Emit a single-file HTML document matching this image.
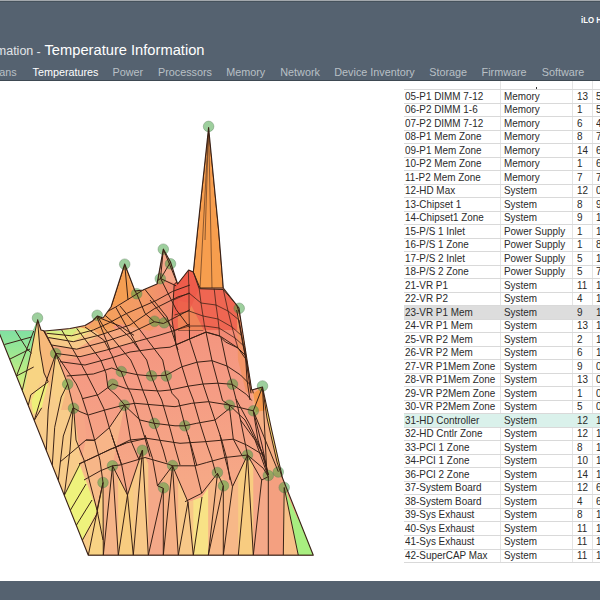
<!DOCTYPE html>
<html><head><meta charset="utf-8"><style>
html,body{margin:0;padding:0;width:600px;height:600px;overflow:hidden;background:#fff;font-family:"Liberation Sans",sans-serif;}
#hdr{position:absolute;left:0;top:0;width:600px;height:81px;background:#556270;}
#topline{position:absolute;left:0;top:0;width:600px;height:1px;background:#a3a8ad;}
#topline2{position:absolute;left:0;top:1px;width:600px;height:1px;background:#46525c;}
#hbot{position:absolute;left:0;top:80px;width:600px;height:1px;background:#3e4952;}
#title{position:absolute;left:0;top:42px;font-size:14.7px;color:#fff;white-space:nowrap;}
#title .pre{color:#d5d9dd;position:absolute;right:-44.5px;}
.tab{position:absolute;top:66.3px;font-size:10.8px;color:#b9c0c6;white-space:nowrap;}
#ilo{position:absolute;left:580.5px;top:13.5px;font-size:9.5px;font-weight:bold;color:#fff;white-space:nowrap;transform:scaleX(0.82);transform-origin:0 0;}
#foot{position:absolute;left:0;top:580.5px;width:600px;height:20px;background:#556270;}
.r{position:absolute;left:404px;width:196px;height:13.5px;border-top:1px solid #d9d9d9;box-sizing:border-box;font-size:9.9px;color:#2a2a2a;}
.r span{position:absolute;top:-0.6px;white-space:nowrap;font-size:10.6px;transform:scaleX(0.935);transform-origin:0 50%;}
.c1{left:1px;} .c2{left:100px;} .c3{left:172.5px;} .c4{left:192px;}
.vl{position:absolute;top:81px;width:1px;height:482px;background:#e4e4e4;}
#plot{position:absolute;left:0;top:0;}
</style></head><body>
<div id="hdr"></div>
<div id="topline"></div><div id="topline2"></div>
<div id="hbot"></div>
<div id="title"><span style="position:absolute;left:44.5px;">Temperature Information</span><span style="position:absolute;right:-33.3px;top:1.6px;font-size:12.5px;color:#e2e5e8;">System Information</span><span style="position:absolute;left:36.6px;top:2.6px;font-size:12.5px;color:#e2e5e8;">-</span></div>
<div class="tab" style="left:-0.7px;">ans</div>
<div class="tab" style="left:32.5px;color:#fff;">Temperatures</div>
<div class="tab" style="left:112.5px;">Power</div>
<div class="tab" style="left:158px;">Processors</div>
<div class="tab" style="left:226.2px;">Memory</div>
<div class="tab" style="left:280.3px;">Network</div>
<div class="tab" style="left:334.3px;">Device Inventory</div>
<div class="tab" style="left:429.3px;">Storage</div>
<div class="tab" style="left:481.6px;">Firmware</div>
<div class="tab" style="left:541.7px;">Software</div>
<div id="ilo">iLO H</div>
<div class="vl" style="left:500px"></div>
<div class="vl" style="left:571.5px"></div>
<div class="vl" style="left:592px"></div>
<div class="r" style="top:89.30px;"><span class="c1">05-P1 DIMM 7-12</span><span class="c2">Memory</span><span class="c3">13</span><span class="c4">5</span></div><div class="r" style="top:102.81px;"><span class="c1">06-P2 DIMM 1-6</span><span class="c2">Memory</span><span class="c3">1</span><span class="c4">5</span></div><div class="r" style="top:116.31px;"><span class="c1">07-P2 DIMM 7-12</span><span class="c2">Memory</span><span class="c3">6</span><span class="c4">4</span></div><div class="r" style="top:129.82px;"><span class="c1">08-P1 Mem Zone</span><span class="c2">Memory</span><span class="c3">8</span><span class="c4">7</span></div><div class="r" style="top:143.32px;"><span class="c1">09-P1 Mem Zone</span><span class="c2">Memory</span><span class="c3">14</span><span class="c4">6</span></div><div class="r" style="top:156.83px;"><span class="c1">10-P2 Mem Zone</span><span class="c2">Memory</span><span class="c3">1</span><span class="c4">6</span></div><div class="r" style="top:170.34px;"><span class="c1">11-P2 Mem Zone</span><span class="c2">Memory</span><span class="c3">7</span><span class="c4">7</span></div><div class="r" style="top:183.84px;"><span class="c1">12-HD Max</span><span class="c2">System</span><span class="c3">12</span><span class="c4">0</span></div><div class="r" style="top:197.35px;"><span class="c1">13-Chipset 1</span><span class="c2">System</span><span class="c3">8</span><span class="c4">9</span></div><div class="r" style="top:210.85px;"><span class="c1">14-Chipset1 Zone</span><span class="c2">System</span><span class="c3">9</span><span class="c4">1</span></div><div class="r" style="top:224.36px;"><span class="c1">15-P/S 1 Inlet</span><span class="c2">Power Supply</span><span class="c3">1</span><span class="c4">1</span></div><div class="r" style="top:237.87px;"><span class="c1">16-P/S 1 Zone</span><span class="c2">Power Supply</span><span class="c3">1</span><span class="c4">8</span></div><div class="r" style="top:251.37px;"><span class="c1">17-P/S 2 Inlet</span><span class="c2">Power Supply</span><span class="c3">5</span><span class="c4">1</span></div><div class="r" style="top:264.88px;"><span class="c1">18-P/S 2 Zone</span><span class="c2">Power Supply</span><span class="c3">5</span><span class="c4">7</span></div><div class="r" style="top:278.38px;"><span class="c1">21-VR P1</span><span class="c2">System</span><span class="c3">11</span><span class="c4">1</span></div><div class="r" style="top:291.89px;"><span class="c1">22-VR P2</span><span class="c2">System</span><span class="c3">4</span><span class="c4">1</span></div><div class="r" style="top:305.40px;background:#dddddd;"><span class="c1">23-VR P1 Mem</span><span class="c2">System</span><span class="c3">9</span><span class="c4">1</span></div><div class="r" style="top:318.90px;"><span class="c1">24-VR P1 Mem</span><span class="c2">System</span><span class="c3">13</span><span class="c4">1</span></div><div class="r" style="top:332.41px;"><span class="c1">25-VR P2 Mem</span><span class="c2">System</span><span class="c3">2</span><span class="c4">1</span></div><div class="r" style="top:345.91px;"><span class="c1">26-VR P2 Mem</span><span class="c2">System</span><span class="c3">6</span><span class="c4">1</span></div><div class="r" style="top:359.42px;"><span class="c1">27-VR P1Mem Zone</span><span class="c2">System</span><span class="c3">9</span><span class="c4">0</span></div><div class="r" style="top:372.93px;"><span class="c1">28-VR P1Mem Zone</span><span class="c2">System</span><span class="c3">13</span><span class="c4">0</span></div><div class="r" style="top:386.43px;"><span class="c1">29-VR P2Mem Zone</span><span class="c2">System</span><span class="c3">1</span><span class="c4">0</span></div><div class="r" style="top:399.94px;"><span class="c1">30-VR P2Mem Zone</span><span class="c2">System</span><span class="c3">5</span><span class="c4">0</span></div><div class="r" style="top:413.44px;background:#daf1eb;"><span class="c1">31-HD Controller</span><span class="c2">System</span><span class="c3">12</span><span class="c4">1</span></div><div class="r" style="top:426.95px;"><span class="c1">32-HD Cntlr Zone</span><span class="c2">System</span><span class="c3">12</span><span class="c4">1</span></div><div class="r" style="top:440.46px;"><span class="c1">33-PCI 1 Zone</span><span class="c2">System</span><span class="c3">8</span><span class="c4">1</span></div><div class="r" style="top:453.96px;"><span class="c1">34-PCI 1 Zone</span><span class="c2">System</span><span class="c3">10</span><span class="c4">1</span></div><div class="r" style="top:467.47px;"><span class="c1">36-PCI 2 Zone</span><span class="c2">System</span><span class="c3">14</span><span class="c4">1</span></div><div class="r" style="top:480.97px;"><span class="c1">37-System Board</span><span class="c2">System</span><span class="c3">12</span><span class="c4">6</span></div><div class="r" style="top:494.48px;"><span class="c1">38-System Board</span><span class="c2">System</span><span class="c3">4</span><span class="c4">6</span></div><div class="r" style="top:507.99px;"><span class="c1">39-Sys Exhaust</span><span class="c2">System</span><span class="c3">8</span><span class="c4">1</span></div><div class="r" style="top:521.49px;"><span class="c1">40-Sys Exhaust</span><span class="c2">System</span><span class="c3">11</span><span class="c4">1</span></div><div class="r" style="top:535.00px;"><span class="c1">41-Sys Exhaust</span><span class="c2">System</span><span class="c3">11</span><span class="c4">1</span></div><div class="r" style="top:548.50px;"><span class="c1">42-SuperCAP Max</span><span class="c2">System</span><span class="c3">11</span><span class="c4">1</span></div>
<div class="r" style="top:562.01px;height:2px;"></div>
<div id="foot"></div><div style="position:absolute;left:535.5px;top:87px;width:1.5px;height:1.5px;background:#333;"></div>
<svg id="plot" width="600" height="600" viewBox="0 0 600 600"><defs><linearGradient id="gl" x1="0" y1="330" x2="0" y2="410" gradientUnits="userSpaceOnUse"><stop offset="0" stop-color="#80e0a2"/><stop offset="0.3" stop-color="#9ee892"/><stop offset="0.6" stop-color="#c8ee80"/><stop offset="0.85" stop-color="#eee488"/><stop offset="1" stop-color="#f5d080"/></linearGradient><linearGradient id="gs" x1="0" y1="300" x2="0" y2="480" gradientUnits="userSpaceOnUse"><stop offset="0" stop-color="#f3927c"/><stop offset="0.5" stop-color="#f59c84"/><stop offset="1" stop-color="#f6a886"/></linearGradient><clipPath id="above"><rect x="0" y="0" width="330" height="330.5"/></clipPath><clipPath id="below"><rect x="0" y="330.5" width="330" height="300"/></clipPath></defs>
<defs><clipPath id="silc"><polygon points="88.3,555.3 -2.0,330.0 33.0,330.0 37.5,319.5 41.0,330.0 44.5,331.0 55.0,330.0 70.0,328.5 85.0,325.5 92.5,321.0 97.5,316.0 103.0,318.0 111.0,307.0 124.7,264.0 135.0,291.0 143.0,290.0 157.0,284.0 163.3,249.0 170.5,262.0 177.6,284.0 188.6,270.0 193.3,272.0 197.6,230.0 208.6,127.5 218.6,230.0 223.3,288.0 239.0,308.0 240.0,315.0 251.7,390.0 262.5,387.0 271.7,430.0 282.5,478.0 313.3,555.3"/></clipPath></defs>
<g clip-path="url(#silc)">
<polygon points="88.3,555.3 -2.0,330.0 33.0,330.0 37.5,319.5 41.0,330.0 44.5,331.0 55.0,330.0 70.0,328.5 85.0,325.5 92.5,321.0 97.5,316.0 103.0,318.0 111.0,307.0 124.7,264.0 135.0,291.0 143.0,290.0 157.0,284.0 163.3,249.0 170.5,262.0 177.6,284.0 188.6,270.0 193.3,272.0 197.6,230.0 208.6,127.5 218.6,230.0 223.3,288.0 239.0,308.0 240.0,315.0 251.7,390.0 262.5,387.0 271.7,430.0 282.5,478.0 313.3,555.3" fill="#f6a585"/>
<polygon points="88.3,555.3 -2.0,330.0 33.0,330.0 37.5,319.5 55.7,353.3 67.7,384.0 73.7,408.0 80.0,455.0 103.0,482.5" fill="#f8cc8a"/>
<polygon points="-2.0,330.0 33.0,330.0 37.5,319.5 30.8,353.3 25.0,388.3 23.0,398.0 24.1,395.0" fill="url(#gl)"/>
<polygon points="30.8,394.8 48.2,381.8 41.7,407.8 33.0,414.3" fill="#eef07a"/>
<polygon points="25.0,388.3 30.8,353.3 37.5,319.5 40.0,350.0 44.0,373.0 36.7,390.0 29.2,405.0 21.7,403.0" fill="#f8d483"/>
<polygon points="64.3,495.3 79.0,464.0 97.0,510.0 82.3,540.3" fill="#eef27c"/>
<polygon points="37.5,319.5 55.7,353.3 50.0,388.0 44.0,373.0 40.0,350.0" fill="#f7b97a"/>
<polygon points="37.5,319.5 55.7,353.3 47.0,336.0" fill="#f0a050" fill-opacity="0.7"/>
<polygon points="55.7,353.3 67.7,384.0 61.0,410.0 50.0,388.0" fill="#f8cf86"/>
<polygon points="67.7,384.0 73.7,408.0 72.0,410.0 61.0,410.0" fill="#f6b880"/>
<polygon points="88.3,555.3 90.0,473.0 103.0,482.5 112.5,465.8 127.5,495.0 142.5,450.0 157.5,485.8 172.5,465.8 188.0,502.0 202.0,497.0 217.5,473.3 232.5,486.7 247.5,455.0 261.7,480.0 268.3,476.7 277.5,471.7 284.2,487.5 313.3,555.3" fill="#f8c487"/>
<polygon points="88.3,473.0 90.0,473.0 103.0,482.5 103.3,482.0 103.3,555.3 88.3,555.3" fill="#f8d284"/>
<polygon points="103.3,482.0 112.5,465.8 118.3,477.1 118.3,555.3 103.3,555.3" fill="#f5b488"/>
<polygon points="118.3,477.1 127.5,495.0 133.3,477.6 133.3,555.3 118.3,555.3" fill="#f8cc80"/>
<polygon points="133.3,477.6 142.5,450.0 148.3,463.8 148.3,555.3 133.3,555.3" fill="#f8c888"/>
<polygon points="148.3,463.8 157.5,485.8 163.3,478.1 163.3,555.3 148.3,555.3" fill="#f4a888"/>
<polygon points="163.3,478.1 172.5,465.8 178.3,479.3 178.3,555.3 163.3,555.3" fill="#f5b085"/>
<polygon points="178.3,479.3 188.0,502.0 193.3,500.1 193.3,555.3 178.3,555.3" fill="#f8c888"/>
<polygon points="193.3,500.1 202.0,497.0 208.3,487.4 208.3,555.3 193.3,555.3" fill="#f8e286"/>
<polygon points="208.3,487.4 217.5,473.3 223.3,478.5 223.3,555.3 208.3,555.3" fill="#f7b888"/>
<polygon points="223.3,478.5 232.5,486.7 238.3,474.4 238.3,555.3 223.3,555.3" fill="#f7b888"/>
<polygon points="238.3,474.4 247.5,455.0 253.3,465.2 253.3,555.3 238.3,555.3" fill="#f8cc80"/>
<polygon points="253.3,465.2 261.7,480.0 268.3,476.7 268.3,555.3 253.3,555.3" fill="#f5a888"/>
<polygon points="268.3,476.7 277.5,471.7 283.3,485.4 283.3,555.3 268.3,555.3" fill="#f4a080"/>
<polygon points="283.3,485.4 284.2,487.5 298.3,555.3 298.3,555.3 283.3,555.3" fill="#f7c088"/>
<polygon points="298.3,487.5 313.3,555.3 313.3,555.3 298.3,555.3" fill="#a8ee80"/>
<polygon points="284.2,487.5 313.3,555.3 298.3,555.3" fill="#a8ee80"/>
<polygon points="64.3,495.3 79.0,464.0 97.0,510.0 82.3,540.3" fill="#eef27c"/>
<polygon points="49.0,340.0 44.5,331.0 55.0,330.0 70.0,328.5 85.0,325.5 92.5,321.0 97.5,316.0 103.0,318.0 120.0,314.0 140.0,306.0 160.0,300.0 176.0,300.0 206.0,332.0 220.0,336.0 238.0,348.0 250.0,360.0 251.7,390.0 253.3,410.8 262.0,430.0 268.3,476.7 261.7,480.0 247.5,455.0 232.5,486.7 217.5,473.3 202.0,497.0 188.0,502.0 172.5,465.8 157.5,485.8 142.5,450.0 127.5,495.0 112.5,465.8 103.0,482.5 90.0,473.0 82.3,398.7 76.3,384.0 55.7,353.3" fill="url(#gs)"/>
<polygon points="80.0,464.0 86.0,440.0 94.7,440.3 109.3,427.7 124.7,405.0 116.0,448.3 112.5,465.8 103.0,482.5 97.0,510.0" fill="#f7b888" fill-opacity="0.85"/>
<polygon points="45.0,330.8 63.3,330.0 80.0,327.5 71.7,335.8 46.7,333.3" fill="#d8ee82"/>
<polygon points="46.7,333.3 71.7,335.8 80.0,327.5 90.0,325.0 93.3,330.0 73.3,341.7 48.3,337.5" fill="#f0e484"/>
<polygon points="48.3,337.5 73.3,341.7 93.3,330.0 100.0,335.0 76.7,349.2 51.7,345.0" fill="#f8c888"/>
<polygon points="51.7,345.0 76.7,349.2 100.0,335.0 130.0,325.0 140.0,320.0 140.0,342.0 130.0,343.3 106.7,350.0 80.0,356.7 60.0,361.7 55.0,353.3" fill="#f7ae80" fill-opacity="0.75"/>
<polygon points="80.0,327.5 90.0,325.0 97.5,316.7 117.0,330.0 100.0,335.0 93.3,330.0" fill="#f5a462"/>
<linearGradient id="gb" x1="100" y1="0" x2="180" y2="0" gradientUnits="userSpaceOnUse"><stop offset="0" stop-color="#f5a05a"/><stop offset="0.55" stop-color="#f39a66"/><stop offset="1" stop-color="#f08474"/></linearGradient>
<polygon points="97.5,316.0 103.0,318.0 111.0,307.0 124.7,264.0 135.0,291.0 143.0,290.0 157.0,284.0 163.3,249.0 170.5,262.0 177.6,284.0 176.0,300.0 178.0,330.0 164.0,323.0 150.0,331.0 120.0,324.0 103.0,330.0" fill="url(#gb)"/>
<polygon points="111.0,307.0 124.7,264.0 136.5,294.0 117.0,304.5" fill="#f59e52"/>
<polygon points="157.0,284.0 163.3,249.0 170.5,262.0 177.6,284.0 160.5,279.0" fill="#f4a88a"/>
<polygon points="124.7,264.0 136.5,294.0 133.0,294.0" fill="#f8b070" fill-opacity="0.6"/>
<g clip-path="url(#above)">
<polygon points="174.2,284.5 188.3,269.5 193.3,272.0 199.2,288.7 223.3,289.5 236.7,305.0 240.0,315.0 246.7,350.0 250.0,365.0 238.0,348.0 220.0,336.0 206.0,332.0 189.5,339.0 176.0,345.0 172.0,320.0" fill="#ef6652"/>
<polygon points="177.9,300.4 190.2,303.2 204.0,330.7 177.9,330.7" fill="#f08a58" fill-opacity="0.85"/>
<polygon points="174.2,284.5 188.3,269.5 193.3,272.0 199.2,288.7 189.0,311.0 174.5,315.0" fill="#ee5a4a" fill-opacity="0.8"/>
</g><g clip-path="url(#below)">
<polygon points="174.2,284.5 188.3,269.5 193.3,272.0 199.2,288.7 223.3,289.5 236.7,305.0 240.0,315.0 246.7,350.0 250.0,365.0 238.0,348.0 220.0,336.0 206.0,332.0 189.5,339.0 176.0,345.0 172.0,320.0" fill="#f38a74"/>
</g>
<polygon points="193.3,272.0 197.6,230.0 208.6,127.5 218.6,230.0 223.3,288.0 200.0,288.0" fill="#f79e4e"/>
<polygon points="236.7,305.0 240.0,315.0 246.7,350.0 253.3,393.3 246.0,392.0 238.0,360.0" fill="#f39466"/>
<polygon points="240.0,330.0 246.7,350.0 253.3,393.3 248.0,370.0" fill="#f5a050"/>
<polygon points="253.3,393.3 262.5,387.0 271.7,430.0 282.5,478.0 278.3,471.7 268.3,475.0 262.0,430.0 253.3,410.8" fill="#f6b084"/>
<polygon points="253.3,393.3 262.5,387.0 267.0,410.0 256.0,412.0" fill="#f4984c"/>
<polygon points="262.5,387.0 271.7,430.0 282.5,478.0 277.0,462.0 267.0,418.0" fill="#f4d66e"/>
<line x1="0" y1="330.4" x2="34" y2="330.4" stroke="#b9b2ae" stroke-width="0.9"/><line x1="41" y1="330.4" x2="62" y2="330.4" stroke="#b9b2ae" stroke-width="0.9"/>
</g>
<circle cx="208.6" cy="126.4" r="5.3" fill="#3ca03c" fill-opacity="0.5" stroke="#5f7f5f" stroke-opacity="0.45" stroke-width="0.9"/>
<circle cx="163.3" cy="249.2" r="5.3" fill="#3ca03c" fill-opacity="0.5" stroke="#5f7f5f" stroke-opacity="0.45" stroke-width="0.9"/>
<circle cx="124.7" cy="264.2" r="5.3" fill="#3ca03c" fill-opacity="0.5" stroke="#5f7f5f" stroke-opacity="0.45" stroke-width="0.9"/>
<circle cx="170.5" cy="263.8" r="5.3" fill="#3ca03c" fill-opacity="0.5" stroke="#5f7f5f" stroke-opacity="0.45" stroke-width="0.9"/>
<circle cx="160.3" cy="278.7" r="5.3" fill="#3ca03c" fill-opacity="0.5" stroke="#5f7f5f" stroke-opacity="0.45" stroke-width="0.9"/>
<circle cx="136.7" cy="293.7" r="5.3" fill="#3ca03c" fill-opacity="0.5" stroke="#5f7f5f" stroke-opacity="0.45" stroke-width="0.9"/>
<circle cx="97.2" cy="315.3" r="5.3" fill="#3ca03c" fill-opacity="0.5" stroke="#5f7f5f" stroke-opacity="0.45" stroke-width="0.9"/>
<circle cx="37.5" cy="318.0" r="5.3" fill="#3ca03c" fill-opacity="0.5" stroke="#5f7f5f" stroke-opacity="0.45" stroke-width="0.9"/>
<circle cx="154.5" cy="321.2" r="5.3" fill="#3ca03c" fill-opacity="0.5" stroke="#5f7f5f" stroke-opacity="0.45" stroke-width="0.9"/>
<circle cx="164.2" cy="322.8" r="5.3" fill="#3ca03c" fill-opacity="0.5" stroke="#5f7f5f" stroke-opacity="0.45" stroke-width="0.9"/>
<circle cx="239.2" cy="308.3" r="5.3" fill="#3ca03c" fill-opacity="0.5" stroke="#5f7f5f" stroke-opacity="0.45" stroke-width="0.9"/>
<circle cx="55.7" cy="353.5" r="5.3" fill="#3ca03c" fill-opacity="0.5" stroke="#5f7f5f" stroke-opacity="0.45" stroke-width="0.9"/>
<circle cx="67.7" cy="384.2" r="5.3" fill="#3ca03c" fill-opacity="0.5" stroke="#5f7f5f" stroke-opacity="0.45" stroke-width="0.9"/>
<circle cx="73.5" cy="408.3" r="5.3" fill="#3ca03c" fill-opacity="0.5" stroke="#5f7f5f" stroke-opacity="0.45" stroke-width="0.9"/>
<circle cx="262.5" cy="386.0" r="5.3" fill="#3ca03c" fill-opacity="0.5" stroke="#5f7f5f" stroke-opacity="0.45" stroke-width="0.9"/>
<circle cx="232.5" cy="384.2" r="5.3" fill="#3ca03c" fill-opacity="0.5" stroke="#5f7f5f" stroke-opacity="0.45" stroke-width="0.9"/>
<circle cx="253.3" cy="410.8" r="5.3" fill="#3ca03c" fill-opacity="0.5" stroke="#5f7f5f" stroke-opacity="0.45" stroke-width="0.9"/>
<circle cx="247.5" cy="455.0" r="5.3" fill="#3ca03c" fill-opacity="0.5" stroke="#5f7f5f" stroke-opacity="0.45" stroke-width="0.9"/>
<circle cx="268.3" cy="475.5" r="5.3" fill="#3ca03c" fill-opacity="0.5" stroke="#5f7f5f" stroke-opacity="0.45" stroke-width="0.9"/>
<circle cx="278.3" cy="472.0" r="5.3" fill="#3ca03c" fill-opacity="0.5" stroke="#5f7f5f" stroke-opacity="0.45" stroke-width="0.9"/>
<circle cx="284.2" cy="487.5" r="5.3" fill="#3ca03c" fill-opacity="0.5" stroke="#5f7f5f" stroke-opacity="0.45" stroke-width="0.9"/>
<circle cx="112.5" cy="465.8" r="5.3" fill="#3ca03c" fill-opacity="0.5" stroke="#5f7f5f" stroke-opacity="0.45" stroke-width="0.9"/>
<circle cx="103.0" cy="482.5" r="5.3" fill="#3ca03c" fill-opacity="0.5" stroke="#5f7f5f" stroke-opacity="0.45" stroke-width="0.9"/>
<circle cx="121.3" cy="371.5" r="5.3" fill="#3ca03c" fill-opacity="0.5" stroke="#5f7f5f" stroke-opacity="0.45" stroke-width="0.9"/>
<circle cx="151.5" cy="375.8" r="5.3" fill="#3ca03c" fill-opacity="0.5" stroke="#5f7f5f" stroke-opacity="0.45" stroke-width="0.9"/>
<circle cx="166.3" cy="376.0" r="5.3" fill="#3ca03c" fill-opacity="0.5" stroke="#5f7f5f" stroke-opacity="0.45" stroke-width="0.9"/>
<circle cx="112.7" cy="384.3" r="5.3" fill="#3ca03c" fill-opacity="0.5" stroke="#5f7f5f" stroke-opacity="0.45" stroke-width="0.9"/>
<circle cx="124.3" cy="405.2" r="5.3" fill="#3ca03c" fill-opacity="0.5" stroke="#5f7f5f" stroke-opacity="0.45" stroke-width="0.9"/>
<circle cx="229.3" cy="405.2" r="5.3" fill="#3ca03c" fill-opacity="0.5" stroke="#5f7f5f" stroke-opacity="0.45" stroke-width="0.9"/>
<circle cx="154.3" cy="423.4" r="5.3" fill="#3ca03c" fill-opacity="0.5" stroke="#5f7f5f" stroke-opacity="0.45" stroke-width="0.9"/>
<circle cx="184.8" cy="425.8" r="5.3" fill="#3ca03c" fill-opacity="0.5" stroke="#5f7f5f" stroke-opacity="0.45" stroke-width="0.9"/>
<circle cx="142.3" cy="450.3" r="5.3" fill="#3ca03c" fill-opacity="0.5" stroke="#5f7f5f" stroke-opacity="0.45" stroke-width="0.9"/>
<circle cx="172.6" cy="465.5" r="5.3" fill="#3ca03c" fill-opacity="0.5" stroke="#5f7f5f" stroke-opacity="0.45" stroke-width="0.9"/>
<circle cx="217.4" cy="472.5" r="5.3" fill="#3ca03c" fill-opacity="0.5" stroke="#5f7f5f" stroke-opacity="0.45" stroke-width="0.9"/>
<circle cx="223.5" cy="485.8" r="5.3" fill="#3ca03c" fill-opacity="0.5" stroke="#5f7f5f" stroke-opacity="0.45" stroke-width="0.9"/>
<circle cx="163.5" cy="487.8" r="5.3" fill="#3ca03c" fill-opacity="0.5" stroke="#5f7f5f" stroke-opacity="0.45" stroke-width="0.9"/>
<g clip-path="url(#silc)">
<polyline points="37.5,319.5 30.8,353.3 22.3,390.3" fill="none" stroke="#3a2116" stroke-width="1.0" stroke-opacity="1.0" stroke-linejoin="round"/>
<polyline points="37.5,319.5 40.0,350.0 44.0,373.0 48.2,381.8" fill="none" stroke="#3a2116" stroke-width="1.0" stroke-opacity="1.0" stroke-linejoin="round"/>
<polyline points="37.5,319.5 55.7,353.3" fill="none" stroke="#3a2116" stroke-width="1.0" stroke-opacity="1.0" stroke-linejoin="round"/>
<polyline points="55.8,353.7 46.0,381.8 34.3,420.3" fill="none" stroke="#3a2116" stroke-width="1.0" stroke-opacity="1.0" stroke-linejoin="round"/>
<polyline points="55.8,353.7 48.2,410.0 46.3,450.3" fill="none" stroke="#3a2116" stroke-width="1.0" stroke-opacity="1.0" stroke-linejoin="round"/>
<polyline points="55.7,353.3 67.7,384.0" fill="none" stroke="#3a2116" stroke-width="1.0" stroke-opacity="1.0" stroke-linejoin="round"/>
<polyline points="67.7,384.0 61.2,397.0 54.7,427.3 52.3,465.3" fill="none" stroke="#3a2116" stroke-width="1.0" stroke-opacity="1.0" stroke-linejoin="round"/>
<polyline points="67.7,384.0 73.7,408.0" fill="none" stroke="#3a2116" stroke-width="1.0" stroke-opacity="1.0" stroke-linejoin="round"/>
<polyline points="73.1,407.8 63.3,436.0 58.3,480.3" fill="none" stroke="#3a2116" stroke-width="1.0" stroke-opacity="1.0" stroke-linejoin="round"/>
<polyline points="73.1,407.8 70.0,450.0 64.3,495.3" fill="none" stroke="#3a2116" stroke-width="1.0" stroke-opacity="1.0" stroke-linejoin="round"/>
<polyline points="28.3,405.3 30.8,394.8 48.2,381.8" fill="none" stroke="#3a2116" stroke-width="1.0" stroke-opacity="1.0" stroke-linejoin="round"/>
<polyline points="34.3,420.3 41.7,407.8" fill="none" stroke="#3a2116" stroke-width="1.0" stroke-opacity="1.0" stroke-linejoin="round"/>
<polyline points="80.0,464.0 64.3,495.3" fill="none" stroke="#3a2116" stroke-width="1.0" stroke-opacity="1.0" stroke-linejoin="round"/>
<polyline points="86.0,484.0 70.3,510.3" fill="none" stroke="#3a2116" stroke-width="1.0" stroke-opacity="1.0" stroke-linejoin="round"/>
<polyline points="92.0,500.0 76.3,525.3" fill="none" stroke="#3a2116" stroke-width="1.0" stroke-opacity="1.0" stroke-linejoin="round"/>
<polyline points="98.0,512.0 82.3,540.3" fill="none" stroke="#3a2116" stroke-width="1.0" stroke-opacity="1.0" stroke-linejoin="round"/>
<polyline points="97.0,510.0 103.0,540.0" fill="none" stroke="#3a2116" stroke-width="1.0" stroke-opacity="1.0" stroke-linejoin="round"/>
<polyline points="15.0,330.0 27.0,349.0 31.7,353.3" fill="none" stroke="#3a2116" stroke-width="1.0" stroke-opacity="1.0" stroke-linejoin="round"/>
<polyline points="4.5,344.5 31.5,337.0" fill="none" stroke="#3a2116" stroke-width="1.0" stroke-opacity="1.0" stroke-linejoin="round"/>
<polyline points="9.0,359.5 30.0,349.0" fill="none" stroke="#3a2116" stroke-width="1.0" stroke-opacity="1.0" stroke-linejoin="round"/>
<polyline points="16.5,376.0 33.7,367.0" fill="none" stroke="#3a2116" stroke-width="1.0" stroke-opacity="1.0" stroke-linejoin="round"/>
<polyline points="33.7,331.0 16.5,376.0" fill="none" stroke="#3a2116" stroke-width="1.0" stroke-opacity="1.0" stroke-linejoin="round"/>
<polyline points="103.0,482.5 97.0,510.0" fill="none" stroke="#3a2116" stroke-width="1.0" stroke-opacity="1.0" stroke-linejoin="round"/>
<polyline points="76.0,440.0 84.0,460.0 97.0,510.0" fill="none" stroke="#3a2116" stroke-width="1.0" stroke-opacity="1.0" stroke-linejoin="round"/>
<polyline points="60.0,462.0 72.0,452.0 86.0,440.0 94.7,440.3" fill="none" stroke="#3a2116" stroke-width="1.0" stroke-opacity="1.0" stroke-linejoin="round"/>
<polyline points="79.0,464.0 94.0,457.0 111.0,449.0 126.0,443.0" fill="none" stroke="#3a2116" stroke-width="1.0" stroke-opacity="1.0" stroke-linejoin="round"/>
<polyline points="84.0,480.0 100.0,471.0 112.5,465.8" fill="none" stroke="#3a2116" stroke-width="1.0" stroke-opacity="1.0" stroke-linejoin="round"/>
<polyline points="73.7,408.0 76.0,440.0" fill="none" stroke="#3a2116" stroke-width="1.0" stroke-opacity="1.0" stroke-linejoin="round"/>
<polyline points="103.0,482.5 88.3,555.3" fill="none" stroke="#3a2116" stroke-width="1.0" stroke-opacity="1.0" stroke-linejoin="round"/>
<polyline points="103.0,482.5 103.3,555.3" fill="none" stroke="#3a2116" stroke-width="1.0" stroke-opacity="1.0" stroke-linejoin="round"/>
<polyline points="112.5,465.8 103.3,555.3" fill="none" stroke="#3a2116" stroke-width="1.0" stroke-opacity="1.0" stroke-linejoin="round"/>
<polyline points="112.5,465.8 118.3,555.3" fill="none" stroke="#3a2116" stroke-width="1.0" stroke-opacity="1.0" stroke-linejoin="round"/>
<polyline points="127.5,495.0 118.3,555.3" fill="none" stroke="#3a2116" stroke-width="1.0" stroke-opacity="1.0" stroke-linejoin="round"/>
<polyline points="127.5,495.0 133.3,555.3" fill="none" stroke="#3a2116" stroke-width="1.0" stroke-opacity="1.0" stroke-linejoin="round"/>
<polyline points="142.5,450.0 133.3,555.3" fill="none" stroke="#3a2116" stroke-width="1.0" stroke-opacity="1.0" stroke-linejoin="round"/>
<polyline points="142.5,450.0 148.3,555.3" fill="none" stroke="#3a2116" stroke-width="1.0" stroke-opacity="1.0" stroke-linejoin="round"/>
<polyline points="163.3,488.3 148.3,555.3" fill="none" stroke="#3a2116" stroke-width="1.0" stroke-opacity="1.0" stroke-linejoin="round"/>
<polyline points="163.3,488.3 163.3,555.3" fill="none" stroke="#3a2116" stroke-width="1.0" stroke-opacity="1.0" stroke-linejoin="round"/>
<polyline points="172.5,465.8 163.3,555.3" fill="none" stroke="#3a2116" stroke-width="1.0" stroke-opacity="1.0" stroke-linejoin="round"/>
<polyline points="172.5,465.8 178.3,555.3" fill="none" stroke="#3a2116" stroke-width="1.0" stroke-opacity="1.0" stroke-linejoin="round"/>
<polyline points="188.0,502.0 178.3,555.3" fill="none" stroke="#3a2116" stroke-width="1.0" stroke-opacity="1.0" stroke-linejoin="round"/>
<polyline points="188.0,502.0 193.3,555.3" fill="none" stroke="#3a2116" stroke-width="1.0" stroke-opacity="1.0" stroke-linejoin="round"/>
<polyline points="202.0,497.0 193.3,555.3" fill="none" stroke="#3a2116" stroke-width="1.0" stroke-opacity="1.0" stroke-linejoin="round"/>
<polyline points="217.5,473.3 208.3,555.3" fill="none" stroke="#3a2116" stroke-width="1.0" stroke-opacity="1.0" stroke-linejoin="round"/>
<polyline points="223.3,485.8 208.3,555.3" fill="none" stroke="#3a2116" stroke-width="1.0" stroke-opacity="1.0" stroke-linejoin="round"/>
<polyline points="223.3,485.8 223.3,555.3" fill="none" stroke="#3a2116" stroke-width="1.0" stroke-opacity="1.0" stroke-linejoin="round"/>
<polyline points="232.5,486.7 223.3,555.3" fill="none" stroke="#3a2116" stroke-width="1.0" stroke-opacity="1.0" stroke-linejoin="round"/>
<polyline points="247.5,455.0 238.3,555.3" fill="none" stroke="#3a2116" stroke-width="1.0" stroke-opacity="1.0" stroke-linejoin="round"/>
<polyline points="247.5,455.0 253.3,555.3" fill="none" stroke="#3a2116" stroke-width="1.0" stroke-opacity="1.0" stroke-linejoin="round"/>
<polyline points="261.7,480.0 253.3,555.3" fill="none" stroke="#3a2116" stroke-width="1.0" stroke-opacity="1.0" stroke-linejoin="round"/>
<polyline points="268.3,476.7 268.3,555.3" fill="none" stroke="#3a2116" stroke-width="1.0" stroke-opacity="1.0" stroke-linejoin="round"/>
<polyline points="284.2,487.5 283.3,555.3" fill="none" stroke="#3a2116" stroke-width="1.0" stroke-opacity="1.0" stroke-linejoin="round"/>
<polyline points="284.2,487.5 298.3,555.3" fill="none" stroke="#3a2116" stroke-width="1.0" stroke-opacity="1.0" stroke-linejoin="round"/>
<polyline points="88.3,555.3 313.3,555.3" fill="none" stroke="#3a2116" stroke-width="1.0" stroke-opacity="1.0" stroke-linejoin="round"/>
<polyline points="157.5,485.8 163.3,488.3" fill="none" stroke="#3a2116" stroke-width="1.0" stroke-opacity="1.0" stroke-linejoin="round"/>
<polyline points="217.5,473.3 223.3,485.8" fill="none" stroke="#3a2116" stroke-width="1.0" stroke-opacity="1.0" stroke-linejoin="round"/>
<polyline points="113.3,448.3 130.0,440.0 146.7,438.3 180.0,443.3 205.0,441.7 233.3,439.2 246.7,445.0 263.3,455.0" fill="none" stroke="#3a2116" stroke-width="1.0" stroke-opacity="1.0" stroke-linejoin="round"/>
<polyline points="124.2,405.0 140.0,420.0 154.2,423.3 175.0,425.8 184.7,425.8 196.7,423.3 215.0,420.0 230.0,408.0" fill="none" stroke="#3a2116" stroke-width="1.0" stroke-opacity="1.0" stroke-linejoin="round"/>
<polyline points="86.0,440.0 94.7,440.3 109.3,427.7 124.7,405.0" fill="none" stroke="#3a2116" stroke-width="1.0" stroke-opacity="1.0" stroke-linejoin="round"/>
<polyline points="79.0,464.0 94.0,457.0 111.0,449.0 126.0,443.0 146.7,438.3" fill="none" stroke="#3a2116" stroke-width="1.0" stroke-opacity="1.0" stroke-linejoin="round"/>
<polyline points="112.5,465.8 120.0,465.0 145.0,457.5 168.3,464.2 172.5,465.8 195.0,465.8 206.7,462.5 225.0,457.5 247.5,455.0 263.3,468.3 268.3,476.7" fill="none" stroke="#3a2116" stroke-width="1.0" stroke-opacity="1.0" stroke-linejoin="round"/>
<polyline points="73.7,408.0 80.0,411.7 88.3,415.0 105.0,410.0 124.2,405.0 135.0,403.3 155.0,405.0 175.0,406.7 191.7,403.3 208.3,401.7 229.2,405.0 253.3,410.8" fill="none" stroke="#3a2116" stroke-width="1.0" stroke-opacity="1.0" stroke-linejoin="round"/>
<polyline points="82.3,398.7 98.3,394.7 112.7,384.0 126.7,388.7 142.7,390.0 160.0,391.0 170.0,390.0 188.0,386.2 203.0,384.0 218.0,383.2 232.2,384.3 246.5,394.5 251.7,400.5" fill="none" stroke="#3a2116" stroke-width="1.0" stroke-opacity="1.0" stroke-linejoin="round"/>
<polyline points="66.7,376.0 93.3,374.0 111.7,368.0 121.0,371.3 137.3,374.7 151.3,376.0 166.0,375.3 182.0,366.7 197.0,362.2 212.0,360.7 227.0,366.0 240.5,375.0 251.0,385.5" fill="none" stroke="#3a2116" stroke-width="1.0" stroke-opacity="1.0" stroke-linejoin="round"/>
<polyline points="60.0,361.7 85.0,365.0 110.0,358.3 130.0,352.0 160.0,348.0 170.0,347.2 189.5,339.0 206.0,332.2 219.5,336.0 225.5,342.0 238.0,348.0 248.0,358.0" fill="none" stroke="#3a2116" stroke-width="1.0" stroke-opacity="1.0" stroke-linejoin="round"/>
<polyline points="55.0,353.3 80.0,356.7 106.7,350.0 130.0,343.3 160.0,335.0 176.0,330.0 190.0,324.0" fill="none" stroke="#3a2116" stroke-width="1.0" stroke-opacity="1.0" stroke-linejoin="round"/>
<polyline points="51.7,345.0 76.7,349.2 105.0,341.7 130.0,333.3 154.2,321.7 163.4,323.5 190.0,309.7" fill="none" stroke="#3a2116" stroke-width="1.0" stroke-opacity="1.0" stroke-linejoin="round"/>
<polyline points="48.3,337.5 73.3,341.7 100.0,335.0 130.0,325.0 154.2,308.8 178.0,296.9 190.0,293.2" fill="none" stroke="#3a2116" stroke-width="1.0" stroke-opacity="1.0" stroke-linejoin="round"/>
<polyline points="46.7,333.3 71.7,335.8 93.3,330.0 108.3,323.3 126.7,313.4 156.0,300.6 172.6,291.4 190.0,285.0" fill="none" stroke="#3a2116" stroke-width="1.0" stroke-opacity="1.0" stroke-linejoin="round"/>
<polyline points="111.7,435.0 121.7,465.0 127.5,495.0 142.5,450.0" fill="none" stroke="#3a2116" stroke-width="1.0" stroke-opacity="1.0" stroke-linejoin="round"/>
<polyline points="145.0,435.0 152.5,458.3 157.5,485.8 172.5,465.8" fill="none" stroke="#3a2116" stroke-width="1.0" stroke-opacity="1.0" stroke-linejoin="round"/>
<polyline points="188.3,435.0 195.0,465.8 201.7,493.3 217.5,473.3" fill="none" stroke="#3a2116" stroke-width="1.0" stroke-opacity="1.0" stroke-linejoin="round"/>
<polyline points="220.0,435.0 225.0,457.5 232.5,486.7 247.5,455.0" fill="none" stroke="#3a2116" stroke-width="1.0" stroke-opacity="1.0" stroke-linejoin="round"/>
<polyline points="247.5,455.0 261.7,480.0 268.3,476.7" fill="none" stroke="#3a2116" stroke-width="1.0" stroke-opacity="1.0" stroke-linejoin="round"/>
<polyline points="112.5,465.8 127.5,495.0" fill="none" stroke="#3a2116" stroke-width="1.0" stroke-opacity="1.0" stroke-linejoin="round"/>
<polyline points="185.0,501.7 201.7,493.3" fill="none" stroke="#3a2116" stroke-width="1.0" stroke-opacity="1.0" stroke-linejoin="round"/>
<polyline points="172.5,465.8 188.0,502.0" fill="none" stroke="#3a2116" stroke-width="1.0" stroke-opacity="1.0" stroke-linejoin="round"/>
<polyline points="40.0,322.5 49.0,340.0 55.7,353.3 76.3,384.0 81.3,395.0 88.0,415.7 94.7,440.3 100.0,460.3 103.0,482.5" fill="none" stroke="#3a2116" stroke-width="1.0" stroke-opacity="1.0" stroke-linejoin="round"/>
<polyline points="61.7,330.0 67.5,340.0 79.0,360.0 86.0,373.0 97.3,395.0 104.0,409.0 109.3,427.7 116.0,448.3 121.3,464.3" fill="none" stroke="#3a2116" stroke-width="1.0" stroke-opacity="1.0" stroke-linejoin="round"/>
<polyline points="76.7,328.3 85.5,340.0 100.7,360.0 106.0,373.3 108.0,388.0 116.0,395.0 124.7,405.0 130.7,440.3 138.7,459.0 142.3,450.3" fill="none" stroke="#3a2116" stroke-width="1.0" stroke-opacity="1.0" stroke-linejoin="round"/>
<polyline points="85.0,327.0 103.7,340.0 111.7,354.7 117.0,368.0 121.0,371.3 126.0,384.0 130.7,393.3 133.3,400.0 145.0,438.3 150.0,456.7" fill="none" stroke="#3a2116" stroke-width="1.0" stroke-opacity="1.0" stroke-linejoin="round"/>
<polyline points="97.7,316.5 104.5,328.5 118.0,345.0 130.7,360.0 137.3,374.7 142.7,390.0 146.7,400.0 154.2,423.3 163.3,450.0 166.7,462.5" fill="none" stroke="#3a2116" stroke-width="1.0" stroke-opacity="1.0" stroke-linejoin="round"/>
<polyline points="103.0,313.5 115.0,324.0 130.0,337.5 146.7,360.0 151.3,376.0 157.3,391.0 161.7,400.0 170.0,428.3 175.8,450.0 180.0,465.0" fill="none" stroke="#3a2116" stroke-width="1.0" stroke-opacity="1.0" stroke-linejoin="round"/>
<polyline points="120.0,306.0 140.0,330.0 162.7,360.0 166.0,375.3 172.0,393.3 178.3,400.0 185.0,425.8 190.8,444.2 196.7,465.0" fill="none" stroke="#3a2116" stroke-width="1.0" stroke-opacity="1.0" stroke-linejoin="round"/>
<polyline points="150.0,300.0 174.5,330.0 176.0,345.0 182.0,366.7 188.0,386.2 193.3,400.0 200.0,423.3 205.8,441.7 211.7,458.3 215.8,473.3" fill="none" stroke="#3a2116" stroke-width="1.0" stroke-opacity="1.0" stroke-linejoin="round"/>
<polyline points="189.5,330.0 189.5,339.0 197.0,362.2 203.0,384.0 208.3,400.0 215.0,420.0 221.7,440.0 226.7,458.3 230.0,480.0" fill="none" stroke="#3a2116" stroke-width="1.0" stroke-opacity="1.0" stroke-linejoin="round"/>
<polyline points="206.0,332.2 212.0,360.7 218.0,383.2 222.5,400.5 229.2,405.0 233.3,439.2 241.7,455.0" fill="none" stroke="#3a2116" stroke-width="1.0" stroke-opacity="1.0" stroke-linejoin="round"/>
<polyline points="221.0,337.5 227.0,366.0 232.2,384.3 236.0,399.0 240.5,420.0 247.5,455.0" fill="none" stroke="#3a2116" stroke-width="1.0" stroke-opacity="1.0" stroke-linejoin="round"/>
<polyline points="229.2,405.0 245.0,420.0 263.3,455.0 268.3,475.0" fill="none" stroke="#3a2116" stroke-width="1.0" stroke-opacity="1.0" stroke-linejoin="round"/>
<polyline points="253.3,410.8 258.0,440.0 268.3,475.0" fill="none" stroke="#3a2116" stroke-width="1.0" stroke-opacity="1.0" stroke-linejoin="round"/>
<polyline points="124.7,264.0 111.0,307.0" fill="none" stroke="#3a2116" stroke-width="1.0" stroke-opacity="1.0" stroke-linejoin="round"/>
<polyline points="124.7,264.0 136.5,294.0" fill="none" stroke="#3a2116" stroke-width="1.0" stroke-opacity="1.0" stroke-linejoin="round"/>
<polyline points="124.7,264.0 128.0,300.0" fill="none" stroke="#3a2116" stroke-width="1.0" stroke-opacity="1.0" stroke-linejoin="round"/>
<polyline points="163.3,249.0 157.0,284.0" fill="none" stroke="#3a2116" stroke-width="1.0" stroke-opacity="1.0" stroke-linejoin="round"/>
<polyline points="163.3,249.0 177.6,284.0" fill="none" stroke="#3a2116" stroke-width="1.0" stroke-opacity="1.0" stroke-linejoin="round"/>
<polyline points="163.3,249.0 160.5,279.0" fill="none" stroke="#3a2116" stroke-width="1.0" stroke-opacity="1.0" stroke-linejoin="round"/>
<polyline points="160.5,279.0 170.5,262.0" fill="none" stroke="#3a2116" stroke-width="1.0" stroke-opacity="1.0" stroke-linejoin="round"/>
<polyline points="97.3,317.0 115.7,307.0 136.8,294.0 160.6,278.5 176.2,285.9" fill="none" stroke="#3a2116" stroke-width="1.0" stroke-opacity="1.0" stroke-linejoin="round"/>
<polyline points="97.3,317.0 120.3,326.2 134.0,335.4" fill="none" stroke="#3a2116" stroke-width="1.0" stroke-opacity="1.0" stroke-linejoin="round"/>
<polyline points="115.7,307.0 139.5,350.0" fill="none" stroke="#3a2116" stroke-width="1.0" stroke-opacity="1.0" stroke-linejoin="round"/>
<polyline points="136.8,294.0 145.0,313.4 154.2,321.7" fill="none" stroke="#3a2116" stroke-width="1.0" stroke-opacity="1.0" stroke-linejoin="round"/>
<polyline points="160.6,278.5 176.2,309.7 190.0,328.0" fill="none" stroke="#3a2116" stroke-width="1.0" stroke-opacity="1.0" stroke-linejoin="round"/>
<polyline points="145.0,289.5 167.0,317.0 178.0,350.0" fill="none" stroke="#3a2116" stroke-width="1.0" stroke-opacity="1.0" stroke-linejoin="round"/>
<polyline points="97.3,318.0 110.2,350.0" fill="none" stroke="#3a2116" stroke-width="1.0" stroke-opacity="1.0" stroke-linejoin="round"/>
<polyline points="173.5,300.0 189.0,293.0 201.0,303.0 216.0,305.0 228.0,311.0 239.0,320.0" fill="none" stroke="#3a2116" stroke-width="0.9" stroke-opacity="0.85" stroke-linejoin="round"/>
<polyline points="174.5,315.0 189.0,311.0 203.0,316.0 218.0,319.0 232.0,327.0 242.0,336.0" fill="none" stroke="#3a2116" stroke-width="0.9" stroke-opacity="0.85" stroke-linejoin="round"/>
<polyline points="175.5,330.0 189.3,326.0 204.5,326.0 219.0,328.0 235.0,338.0 245.0,347.0" fill="none" stroke="#3a2116" stroke-width="0.9" stroke-opacity="0.85" stroke-linejoin="round"/>
<polyline points="188.3,269.5 189.0,293.0 189.0,311.0 189.3,326.0 189.5,339.0" fill="none" stroke="#3a2116" stroke-width="0.9" stroke-opacity="0.85" stroke-linejoin="round"/>
<polyline points="199.2,288.7 201.0,303.0 203.0,316.0 204.5,326.0 206.0,332.2" fill="none" stroke="#3a2116" stroke-width="0.9" stroke-opacity="0.85" stroke-linejoin="round"/>
<polyline points="214.2,288.7 216.0,305.0 218.0,319.0 219.0,328.0 219.5,336.0" fill="none" stroke="#3a2116" stroke-width="0.9" stroke-opacity="0.85" stroke-linejoin="round"/>
<polyline points="223.3,289.5 228.0,311.0 232.0,327.0 235.0,338.0 238.0,348.0" fill="none" stroke="#3a2116" stroke-width="0.9" stroke-opacity="0.85" stroke-linejoin="round"/>
<polyline points="178.0,330.5 203.3,330.5" fill="none" stroke="#3a2116" stroke-width="0.8" stroke-opacity="0.6" stroke-linejoin="round"/>
<polyline points="174.2,284.5 188.3,269.5 193.3,272.0 199.2,288.7 223.3,289.5 236.7,305.0 240.0,315.0 246.7,350.0 250.0,365.0 238.0,348.0 220.0,336.0 206.0,332.0 189.5,339.0 176.0,345.0 172.0,320.0 174.2,284.5" fill="none" stroke="#3a2116" stroke-width="1.0" stroke-opacity="1.0" stroke-linejoin="round"/>
<polyline points="208.6,127.5 200.0,288.0" fill="none" stroke="#3a2116" stroke-width="0.8" stroke-opacity="0.7" stroke-linejoin="round"/>
<polyline points="208.6,127.5 212.0,288.0" fill="none" stroke="#3a2116" stroke-width="0.8" stroke-opacity="0.7" stroke-linejoin="round"/>
<polyline points="208.6,127.5 205.0,240.0" fill="none" stroke="#3a2116" stroke-width="0.8" stroke-opacity="0.7" stroke-linejoin="round"/>
<polyline points="193.3,272.0 197.6,230.0 208.6,127.5 218.6,230.0 223.3,288.0 200.0,288.0 193.3,272.0" fill="none" stroke="#3a2116" stroke-width="1.0" stroke-opacity="1.0" stroke-linejoin="round"/>
<polyline points="236.7,310.0 243.0,345.0 253.3,393.3" fill="none" stroke="#3a2116" stroke-width="1.0" stroke-opacity="1.0" stroke-linejoin="round"/>
<polyline points="239.0,320.0 246.0,360.0 251.0,393.3" fill="none" stroke="#3a2116" stroke-width="1.0" stroke-opacity="1.0" stroke-linejoin="round"/>
<polyline points="245.0,347.0 247.0,380.0 250.0,400.0" fill="none" stroke="#3a2116" stroke-width="1.0" stroke-opacity="1.0" stroke-linejoin="round"/>
<polyline points="262.5,387.0 253.3,410.8" fill="none" stroke="#3a2116" stroke-width="1.0" stroke-opacity="1.0" stroke-linejoin="round"/>
<polyline points="262.5,387.0 267.0,418.0 277.0,462.0 282.5,478.0" fill="none" stroke="#3a2116" stroke-width="1.0" stroke-opacity="1.0" stroke-linejoin="round"/>
<polyline points="253.3,410.8 278.3,471.7" fill="none" stroke="#3a2116" stroke-width="1.0" stroke-opacity="1.0" stroke-linejoin="round"/>
<polyline points="253.3,410.8 262.0,445.0 268.3,475.0" fill="none" stroke="#3a2116" stroke-width="1.0" stroke-opacity="1.0" stroke-linejoin="round"/>
<polyline points="262.5,387.0 266.7,470.0" fill="none" stroke="#3a2116" stroke-width="1.0" stroke-opacity="1.0" stroke-linejoin="round"/>
<polyline points="240.5,420.0 255.0,440.0 268.3,476.7" fill="none" stroke="#3a2116" stroke-width="1.0" stroke-opacity="1.0" stroke-linejoin="round"/>
<polyline points="236.0,399.0 250.0,425.0 263.3,455.0" fill="none" stroke="#3a2116" stroke-width="1.0" stroke-opacity="1.0" stroke-linejoin="round"/>
</g>
<polyline points="37.5,319.5 41.0,330.0 44.5,331.0 55.0,330.0 70.0,328.5 85.0,325.5 92.5,321.0 97.5,316.0 103.0,318.0 111.0,307.0 124.7,264.0 135.0,291.0 143.0,290.0 157.0,284.0 163.3,249.0 170.5,262.0 177.6,284.0 188.6,270.0 193.3,272.0 197.6,230.0 208.6,127.5 218.6,230.0 223.3,288.0 239.0,308.0 240.0,315.0 251.7,390.0 262.5,387.0 271.7,430.0 282.5,478.0 313.3,555.3 88.3,555.3 -2.0,330.0" fill="none" stroke="#3a2116" stroke-width="1.1" stroke-opacity="1.0" stroke-linejoin="round"/></svg>
</body></html>
